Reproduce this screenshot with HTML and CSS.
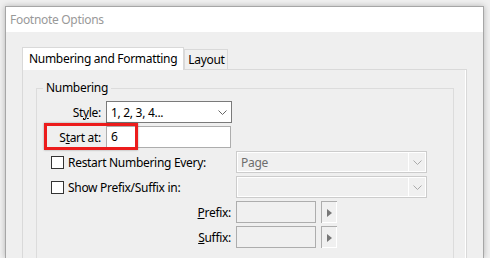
FILE: index.html
```html
<!DOCTYPE html>
<html lang="en">

<head>
    <meta charset="UTF-8">
    <meta name="viewport" content="width=device-width, initial-scale=1.0">
    <title>Footnote Options</title>
    <link rel="stylesheet" href="styles.css">
</head>

<body>

    <div class="dialog">
        <div class="titlebar">Footnote Options</div>

        <div class="dialog-body">
            <div class="tabs">
                <div class="tab active">Numbering and Formatting</div>
                <div class="tab">Layout</div>
            </div>

            <div class="tab-panel">
                <fieldset class="group">
                    <legend>Numbering</legend>

                    <div class="row">
                        <span class="label short">St<u>y</u>le:</span>
                        <div class="select active">
                            <span class="value">1, 2, 3, 4...</span>
                            <span class="drop">
                                <svg width="9" height="5" viewBox="0 0 9 5"><polyline points="0.5,0.5 4.5,4.5 8.5,0.5" fill="none" stroke="#666" stroke-width="1"/></svg>
                            </span>
                        </div>
                    </div>

                    <div class="row">
                        <span class="label short">S<u>t</u>art at:</span>
                        <div class="input">6</div>
                        <div class="callout"></div>
                    </div>

                    <div class="row">
                        <span class="label check-label"><span class="checkbox"></span>Restart Numbering Every:</span>
                        <div class="select disabled">
                            <span class="value">Page</span>
                            <span class="drop">
                                <svg width="9" height="5" viewBox="0 0 9 5"><polyline points="0.5,0.5 4.5,4.5 8.5,0.5" fill="none" stroke="#aaa" stroke-width="1"/></svg>
                            </span>
                        </div>
                    </div>

                    <div class="row">
                        <span class="label check-label"><span class="checkbox"></span>Show Prefix/Suffix in:</span>
                        <div class="select disabled">
                            <span class="value"></span>
                            <span class="drop">
                                <svg width="9" height="5" viewBox="0 0 9 5"><polyline points="0.5,0.5 4.5,4.5 8.5,0.5" fill="none" stroke="#aaa" stroke-width="1"/></svg>
                            </span>
                        </div>
                    </div>

                    <div class="row">
                        <span class="label long"><u>P</u>refix:</span>
                        <div class="input small disabled"></div>
                        <div class="arrow-btn">
                            <svg width="5" height="8" viewBox="0 0 5 8"><polygon points="0,0 5,4 0,8" fill="#777"/></svg>
                        </div>
                    </div>

                    <div class="row">
                        <span class="label long"><u>S</u>uffix:</span>
                        <div class="input small disabled"></div>
                        <div class="arrow-btn">
                            <svg width="5" height="8" viewBox="0 0 5 8"><polygon points="0,0 5,4 0,8" fill="#777"/></svg>
                        </div>
                    </div>
                </fieldset>
            </div>
        </div>
    </div>

</body>

</html>
```

FILE: styles.css
```css
body {
    margin: 0;
    background-color: #f0f0f0;
    font-family: "Noto Sans", Arial, sans-serif;
    font-size: 12px;
    letter-spacing: -0.3px;
    color: #000;
}

.dialog {
    margin: 6px 0 0 5px;
    width: 477px;
    height: 251px;
    overflow: hidden;
    border: 1px solid #a6a6a6;
    border-bottom: none;
    background-color: #efefef;
    box-shadow: 0 0 6px rgba(0, 0, 0, .25);
}

.titlebar {
    height: 25px;
    line-height: 26px;
    padding-left: 4px;
    background-color: #fff;
    color: #999;
}

.dialog-body {
    padding: 15px 16px 0 16px;
}

/* tabs */
.tabs {
    display: flex;
    align-items: flex-end;
    height: 22px;
}

.tab {
    height: 19px;
    line-height: 19px;
    padding: 0 2px 0 3px;
    border: 1px solid #d9d9d9;
    border-bottom: none;
    background-color: #f0f0f0;
}

.tab.active {
    height: 22px;
    line-height: 22px;
    padding: 0 6px 0 6px;
    background-color: #fff;
    position: relative;
    z-index: 1;
    margin-bottom: -1px;
}

.tab-panel {
    height: 200px;
    border: 1px solid #d9d9d9;
    box-shadow: inset -1px 0 0 #fff;
    padding: 10px 12px 0 13px;
}

/* group box */
.group {
    margin: 0;
    padding: 5px 0 20px 0;
    border: 1px solid #dcdcdc;
    min-width: 0;
}

.group legend {
    margin-left: 6px;
    padding: 0 3px;
    line-height: 16px;
}

.row {
    display: flex;
    align-items: center;
    gap: 5px;
    height: 22px;
    margin-bottom: 3px;
    position: relative;
}

.label {
    flex: none;
    text-align: right;
}

.label.short {
    width: 64px;
}

.label.long {
    width: 194px;
}

.label.check-label {
    width: 180px;
    padding-left: 14px;
    text-align: left;
    display: flex;
    align-items: center;
}

.checkbox {
    width: 11px;
    height: 11px;
    border: 1px solid #333;
    background-color: #fff;
    margin-right: 4px;
}

/* controls */
.select {
    display: flex;
    align-items: center;
    height: 20px;
    border: 1px solid #7a7a7a;
    background-color: #fff;
}

.select.active {
    width: 124px;
}

.select.disabled {
    width: 189px;
    border-color: #cccccc;
    background-color: #f0f0f0;
    box-shadow: inset 0 0 0 1px #fff;
    color: #6d6d6d;
}

.select .value {
    flex: 1;
    padding-left: 4px;
}

.select .drop {
    width: 17px;
    height: 18px;
    display: flex;
    align-items: center;
    justify-content: center;
}

.select.disabled .drop {
    border-left: 1px solid #fff;
}

.input {
    width: 119px;
    height: 20px;
    line-height: 20px;
    padding-left: 4px;
    border: 1px solid #adadad;
    background-color: #fff;
}

.input.small {
    width: 74px;
    padding-left: 4px;
}

.input.disabled {
    background-color: #f0f0f0;
}

.arrow-btn {
    width: 15px;
    height: 21px;
    border-top: 1px solid #adadad;
    border-left: 1px solid #adadad;
    box-shadow: inset -1px -1px 0 #fff;
    background-color: #f0f0f0;
    display: flex;
    align-items: center;
    justify-content: center;
}

/* red highlight round "Start at" */
.callout {
    position: absolute;
    left: 7px;
    top: -3px;
    width: 88px;
    height: 21px;
    border: 3px solid #ec1c1c;
    box-shadow: 0 0 2px rgba(0, 0, 0, .35);
}
```
